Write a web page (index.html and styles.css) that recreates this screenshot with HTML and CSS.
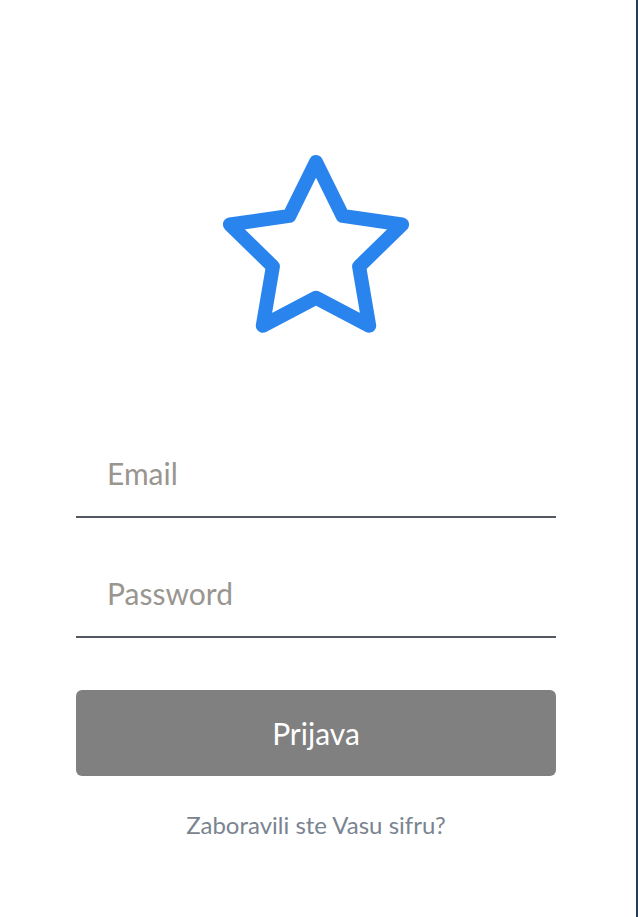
FILE: index.html
```html
<!DOCTYPE html>
<html lang="hr">
<head>
<meta charset="utf-8">
<title>Prijava</title>
<link rel="stylesheet" href="styles.css">
</head>
<body>
<div class="screen">
  <main class="login">
    <div class="logo">
      <svg width="200" height="200" viewBox="0 0 200 200" aria-hidden="true">
        <polygon points="100,10 126.6,63.9 186.1,72.5 143.1,114.5 153.2,173.7 100,145.7 46.8,173.7 56.9,114.5 13.9,72.5 73.4,63.9" fill="none" stroke="#2a84ee" stroke-width="14" stroke-linejoin="round"/>
      </svg>
    </div>
    <form class="form">
      <input class="field" type="email" placeholder="Email">
      <input class="field" type="password" placeholder="Password">
      <button class="btn" type="button">Prijava</button>
      <a class="forgot" href="#">Zaboravili ste Vasu sifru?</a>
    </form>
  </main>
</div>
</body>
</html>
```

FILE: styles.css
```css
* { box-sizing: border-box; }
html, body { margin: 0; padding: 0; background: #fff; }
body { font-family: Lato, "Open Sans", sans-serif; }
.screen {
  width: 638px;
  height: 917px;
  border-right: 2px solid #243c5c;
  overflow: hidden;
}
.login {
  width: 480px;
  margin-left: 76px;
  display: flex;
  flex-direction: column;
}
.logo {
  display: flex;
  justify-content: center;
  padding-top: 152px;
  height: 432px;
}
.logo svg { display: block; }
.form { display: flex; flex-direction: column; }
.field {
  height: 86px;
  border: 0;
  border-bottom: 2px solid #53575f;
  padding: 0 0 3px 31px;
  margin: 0 0 34px 0;
  font-family: Lato, sans-serif;
  font-size: 30px;
  color: #333;
  background: transparent;
  outline: none;
}
.field::placeholder { color: #999590; }
.btn {
  height: 86px;
  margin-top: 18px;
  border: 0;
  border-radius: 6px;
  background: #808080;
  color: #fff;
  font-family: Lato, sans-serif;
  font-size: 30px;
}
.forgot {
  align-self: center;
  margin-top: 34px;
  font-size: 24px;
  color: #7a8490;
  text-decoration: none;
}
```
